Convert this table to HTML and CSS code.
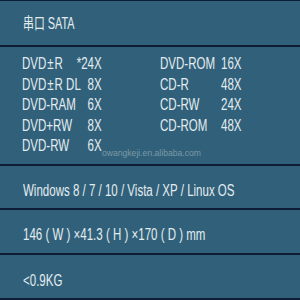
FILE: index.html
```html
<!DOCTYPE html>
<html>
<head>
<meta charset="utf-8">
<link rel="stylesheet" href="styles.css">
</head>
<body>
<div class="panel">
  <div class="sec s1"><span class="sq">串口 SATA</span></div>
  <div class="sec s2">
    <div class="grid">
      <div class="cell"><span class="sq n">DVD&#8202;±&#8202;R</span><span class="sq v">*24X</span></div>
      <div class="cell"><span class="sq n">DVD-ROM</span><span class="sq v">16X</span></div>
      <div class="cell"><span class="sq n">DVD&#8202;±&#8202;R DL</span><span class="sq v">8X</span></div>
      <div class="cell"><span class="sq n">CD-R</span><span class="sq v">48X</span></div>
      <div class="cell"><span class="sq n">DVD-RAM</span><span class="sq v">6X</span></div>
      <div class="cell"><span class="sq n">CD-RW</span><span class="sq v">24X</span></div>
      <div class="cell"><span class="sq n">DVD+RW</span><span class="sq v">8X</span></div>
      <div class="cell"><span class="sq n">CD-ROM</span><span class="sq v">48X</span></div>
      <div class="cell"><span class="sq n">DVD-RW</span><span class="sq v">6X</span></div>
    </div>
    <div class="mark">owangkeji.en.alibaba.com</div>
  </div>
  <div class="sec s3"><span class="sq">Windows 8 / 7 / 10 / Vista / XP / Linux OS</span></div>
  <div class="sec s4"><span class="sq">146 ( W ) ×41.3 ( H ) ×170 ( D ) mm</span></div>
  <div class="sec s5"><span class="sq">&lt;0.9KG</span></div>
</div>
</body>
</html>
```

FILE: styles.css
```css
html, body {
  margin: 0;
  padding: 0;
}
body {
  width: 300px;
  height: 300px;
  overflow: hidden;
  background: #31617a;
}
.panel {
  width: 300px;
  height: 300px;
  box-sizing: border-box;
  border-top: 1px solid #0e1c36;
  background: #31617a;
  color: #e4ecf0;
  font-family: "Liberation Sans", "Noto Sans CJK SC", sans-serif;
  font-size: 16px;
  line-height: 16px;
  display: flex;
  flex-direction: column;
  overflow: hidden;
}
.sec {
  box-sizing: border-box;
  border-bottom: 2px solid #0e1c36;
  padding-left: 23px;
  white-space: nowrap;
  position: relative;
}
.s1 { height: 46px; padding-top: 15px; }
.s2 { height: 119px; padding-top: 7px; padding-left: 22px; }
.s3 { height: 44px; padding-top: 17px; }
.s4 { height: 45px; padding-top: 17px; }
.s5 { height: 45px; padding-top: 18px; }
.sq {
  display: inline-block;
  transform: scaleX(0.72);
  transform-origin: left center;
}
.s1 .sq {
  transform: scaleX(0.68);
}
.grid {
  display: grid;
  grid-template-columns: 80px 81px;
  column-gap: 58px;
  line-height: 20.5px;
  position: relative;
  z-index: 1;
}
.cell {
  display: flex;
  min-width: 0;
}
.sq.n {
  flex: 1 1 0;
  min-width: 0;
}
.sq.v {
  flex: none;
  transform-origin: right center;
}
.mark {
  position: absolute;
  left: 102px;
  top: 102px;
  font-size: 8.6px;
  line-height: 9px;
  color: rgba(190, 200, 206, 0.55);
}
```
